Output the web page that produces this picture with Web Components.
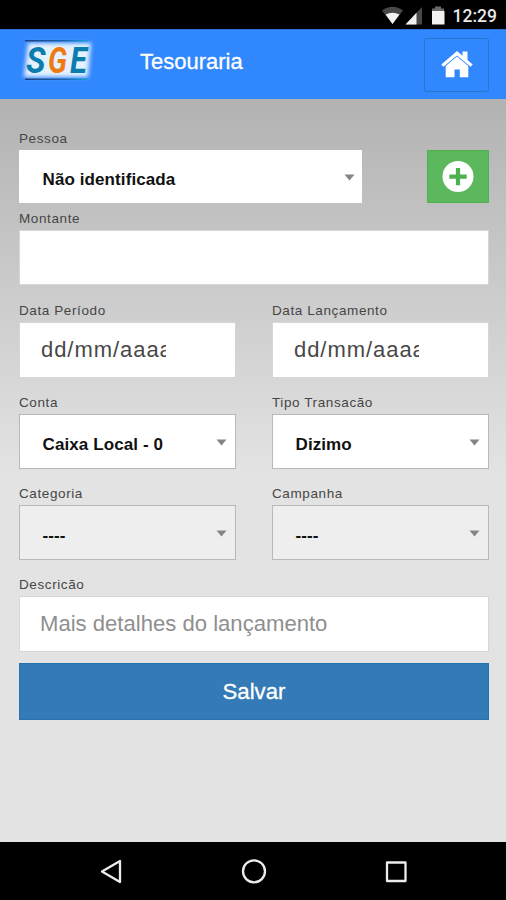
<!DOCTYPE html>
<html lang="pt-BR">
<head>
<meta charset="utf-8">
<title>Tesouraria</title>
<style>
  body {
    margin: 0;
    font-family: "Liberation Sans", Arial, sans-serif;
    background: #000;
  }
</style>
</head>
<body>
<sge-app></sge-app>

<script>
class StatusBar extends HTMLElement {
  constructor () {
    super()
    this.attachShadow({ mode: 'open' })
  }

  connectedCallback () {
    this.shadowRoot.innerHTML = `
      <style>
        :host {
          display: flex;
          justify-content: flex-end;
          height: 29px;
          padding-right: 9px;
          box-sizing: border-box;
          background: #000;
          color: #e8e8e8;
          font: 500 17.5px/32px Roboto, sans-serif;
        }
        svg { display: block; margin-right: 7px; }
      </style>
      <svg width="64" height="29" viewBox="0 0 64 29">
        <path d="M0 10.500Q10.500 3 21 10.500L10.500 24Z" fill="#484848"/>
        <path d="M3.500 14.500Q10.500 11 17.500 14.500L10.500 24Z" fill="#f2f2f2"/>
        <path d="M23.500 24.500L40 7V24.500Z" fill="#484848"/>
        <path d="M23.500 24.500L34.500 12.800V24.500Z" fill="#f2f2f2"/>
        <path d="M50 8.500h3v-2h6v2h3v4H50z" fill="#6a6a6a"/>
        <path d="M50 11h12.500v13.500H50z" fill="#f2f2f2"/>
      </svg>
      <slot></slot>
    `
  }
}

class SgeLogo extends HTMLElement {
  constructor () {
    super()
    this.attachShadow({ mode: 'open' })
  }

  connectedCallback () {
    this.shadowRoot.innerHTML = `
      <style>
        :host { display: block; width: 76px; height: 48px; }
        svg { display: block; }
        text { font: italic 700 37px Roboto, sans-serif; fill: #0b7cae; }
        .g { fill: #f07a12; }
      </style>
      <svg width="76" height="48" viewBox="0 0 76 48">
        <defs>
          <filter id="glow" x="-20%" y="-20%" width="140%" height="140%">
            <feGaussianBlur stdDeviation="2.2"/>
          </filter>
          <linearGradient id="line">
            <stop offset="0" stop-color="#1d3f80"/>
            <stop offset=".6" stop-color="#1c5fb0"/>
            <stop offset="1" stop-color="#18a0d8"/>
          </linearGradient>
        </defs>
        <path d="M9 7H72L69 41H5Z" fill="#e4f1ff" filter="url(#glow)"/>
        <rect x="6" y="4" width="63" height="1.500" fill="url(#line)"/>
        <rect x="6" y="42.500" width="63" height="1.500" fill="url(#line)"/>
        <text x="7" y="37" textLength="19.500" lengthAdjust="spacingAndGlyphs">S</text>
        <text class="g" x="29" y="37" textLength="19" lengthAdjust="spacingAndGlyphs">G</text>
        <text x="51" y="37" textLength="17" lengthAdjust="spacingAndGlyphs">E</text>
      </svg>
    `
  }
}

class AppHeader extends HTMLElement {
  constructor () {
    super()
    this.attachShadow({ mode: 'open' })
  }

  connectedCallback () {
    this.shadowRoot.innerHTML = `
      <style>
        :host {
          display: flex;
          align-items: flex-start;
          height: 70px;
          box-sizing: border-box;
          padding: 6px 17px 0 19px;
          background: #3187fd;
          border-top: 1px solid #2a72d4;
        }
        h1 {
          flex: 1;
          margin: 13px 0 0 45px;
          font-size: 22px;
          font-weight: 400;
          line-height: 26px;
          color: #fff;
          -webkit-text-stroke: .3px #fff;
        }
        button {
          width: 65px;
          height: 54px;
          margin-top: 2px;
          padding: 0;
          border: 1px solid #2a76ca;
          border-radius: 2px;
          background: none;
        }
        svg { display: block; margin: 0 auto; }
      </style>
      <sge-logo></sge-logo>
      <h1><slot></slot></h1>
      <button aria-label="Início">
        <svg width="32" height="28" viewBox="0 0 32 28" fill="#fff">
          <path d="M16 0L21.500 4.700V.5H26.500V9L31.700 13.500L29.600 15.700L16 4.400L2.400 15.700L.3 13.500Z"/>
          <path d="M16 5.600L27.300 14.900V26.300H18.800V18.500H13.500V26.300H4.700V14.900Z"/>
        </svg>
      </button>
    `
  }
}

class FormField extends HTMLElement {
  constructor () {
    super()
    this.attachShadow({ mode: 'open' })
  }

  connectedCallback () {
    this.shadowRoot.innerHTML = `
      <style>
        :host { display: block; min-width: 0; }
        label {
          display: block;
          padding-top: 1px;
          margin-bottom: 3px;
          font-size: 13.5px;
          line-height: 16px;
          letter-spacing: .6px;
          color: #464646;
        }
      </style>
      <label>${this.getAttribute('label')}</label>
      <slot></slot>
    `
  }
}

class SelectBox extends HTMLElement {
  constructor () {
    super()
    this.attachShadow({ mode: 'open' })
  }

  connectedCallback () {
    this.shadowRoot.innerHTML = `
      <style>
        :host {
          display: flex;
          align-items: center;
          justify-content: space-between;
          height: 55px;
          box-sizing: border-box;
          padding: 6px 8px 0 22.500px;
          border: 1.500px solid #b9b9b9;
          background: #fff;
          color: #111;
          font-size: 17px;
          font-weight: 700;
          letter-spacing: .1px;
        }
        :host([plain]) {
          height: 53px;
          padding: 7px 7px 0 23.500px;
          border: 0;
        }
        :host([disabled]) { background: #eee; }
        svg { margin-bottom: 5px; }
      </style>
      <span><slot></slot></span>
      <svg width="11" height="7" viewBox="0 0 11 7"><path d="M.5.500H10.500L5.500 6.500Z" fill="#858585"/></svg>
    `
  }
}

class TextBox extends HTMLElement {
  constructor () {
    super()
    this.attachShadow({ mode: 'open' })
  }

  connectedCallback () {
    this.shadowRoot.innerHTML = `
      <style>
        :host {
          display: flex;
          align-items: center;
          height: 56px;
          box-sizing: border-box;
          padding: 0 20px;
          border: 1px solid #d6d6d6;
          background: #fff;
          color: #8f8f8f;
          font-size: 22.1px;
        }
        :host([money]) { height: 55px; }
        :host([date]) { padding-left: 21px; color: #484848; }
        /* the native date control cuts its last letter */
        :host([date]) span {
          width: 125px;
          overflow: hidden;
          white-space: nowrap;
          font-size: 22px;
          letter-spacing: .95px;
        }
      </style>
      <span><slot></slot></span>
    `
  }
}

class AddButton extends HTMLElement {
  constructor () {
    super()
    this.attachShadow({ mode: 'open' })
  }

  connectedCallback () {
    this.shadowRoot.innerHTML = `
      <style>
        :host {
          display: flex;
          align-items: center;
          justify-content: center;
          width: 62px;
          height: 53px;
          box-sizing: border-box;
          border: 1px solid #50b050;
          background: #5cb85c;
        }
      </style>
      <svg width="32" height="32" viewBox="0 0 32 32">
        <circle cx="16" cy="15.500" r="15.500" fill="#fff"/>
        <path d="M16 7V24.200M7.300 15.700H24.700" stroke="#4fb04f" stroke-width="4.200"/>
      </svg>
    `
  }
}

class SaveButton extends HTMLElement {
  constructor () {
    super()
    this.attachShadow({ mode: 'open' })
  }

  connectedCallback () {
    this.shadowRoot.innerHTML = `
      <style>
        :host { display: block; }
        button {
          display: block;
          width: 100%;
          height: 57px;
          padding: 0;
          border: 1px solid #2672ad;
          background: #337ab7;
          color: #fff;
          font: 22.2px "Liberation Sans", Arial, sans-serif;
          -webkit-text-stroke: .3px #fff;
        }
      </style>
      <button><slot></slot></button>
    `
  }
}

class NavBar extends HTMLElement {
  constructor () {
    super()
    this.attachShadow({ mode: 'open' })
  }

  connectedCallback () {
    this.shadowRoot.innerHTML = `
      <style>
        :host {
          display: flex;
          align-items: center;
          justify-content: space-between;
          height: 58px;
          box-sizing: border-box;
          padding: 0 98px 0 99px;
          background: #000;
        }
        svg { fill: none; stroke: #ececec; stroke-width: 2.300; stroke-linejoin: round; }
      </style>
      <svg width="24" height="26" viewBox="0 0 24 26"><path d="M21 3V24L3 13.500Z"/></svg>
      <svg width="26" height="26" viewBox="0 0 26 26"><circle cx="13" cy="13.300" r="11"/></svg>
      <svg width="24" height="26" viewBox="0 0 24 26"><path d="M3 4.500H21.500V23H3Z"/></svg>
    `
  }
}

class SgeApp extends HTMLElement {
  constructor () {
    super()
    this.attachShadow({ mode: 'open' })
  }

  connectedCallback () {
    this.shadowRoot.innerHTML = `
      <style>
        :host {
          display: flex;
          flex-direction: column;
          height: 900px;
        }
        main {
          flex: 1;
          box-sizing: border-box;
          padding: 31px 17px 0 19px;
          background: linear-gradient(#b2b2b2, #b5b5b5 20px, #cbcbcb 190px, #e3e3e3 375px);
        }
        .person {
          display: flex;
          align-items: flex-end;
          justify-content: space-between;
          margin-bottom: 7px;
        }
        .person form-field { width: 343px; }
        .pair {
          display: grid;
          grid-template-columns: 217px 217px;
          justify-content: space-between;
          margin-bottom: 16px;
        }
        .amount { margin-bottom: 17px; }
        .details { margin-bottom: 11px; }
      </style>
      <status-bar>12:29</status-bar>
      <app-header>Tesouraria</app-header>
      <main>
        <div class="person">
          <form-field label="Pessoa"><select-box plain>Não identificada</select-box></form-field>
          <add-button></add-button>
        </div>
        <form-field class="amount" label="Montante"><text-box money></text-box></form-field>
        <div class="pair">
          <form-field label="Data Período"><text-box date>dd/mm/aaaa</text-box></form-field>
          <form-field label="Data Lançamento"><text-box date>dd/mm/aaaa</text-box></form-field>
        </div>
        <div class="pair">
          <form-field label="Conta"><select-box>Caixa Local - 0</select-box></form-field>
          <form-field label="Tipo Transacão"><select-box>Dizimo</select-box></form-field>
        </div>
        <div class="pair">
          <form-field label="Categoria"><select-box disabled>----</select-box></form-field>
          <form-field label="Campanha"><select-box disabled>----</select-box></form-field>
        </div>
        <form-field class="details" label="Descricão"><text-box>Mais detalhes do lançamento</text-box></form-field>
        <save-button>Salvar</save-button>
      </main>
      <nav-bar></nav-bar>
    `
  }
}

customElements.define('status-bar', StatusBar)
customElements.define('sge-logo', SgeLogo)
customElements.define('app-header', AppHeader)
customElements.define('form-field', FormField)
customElements.define('select-box', SelectBox)
customElements.define('text-box', TextBox)
customElements.define('add-button', AddButton)
customElements.define('save-button', SaveButton)
customElements.define('nav-bar', NavBar)
customElements.define('sge-app', SgeApp)
</script>
</body>
</html>
